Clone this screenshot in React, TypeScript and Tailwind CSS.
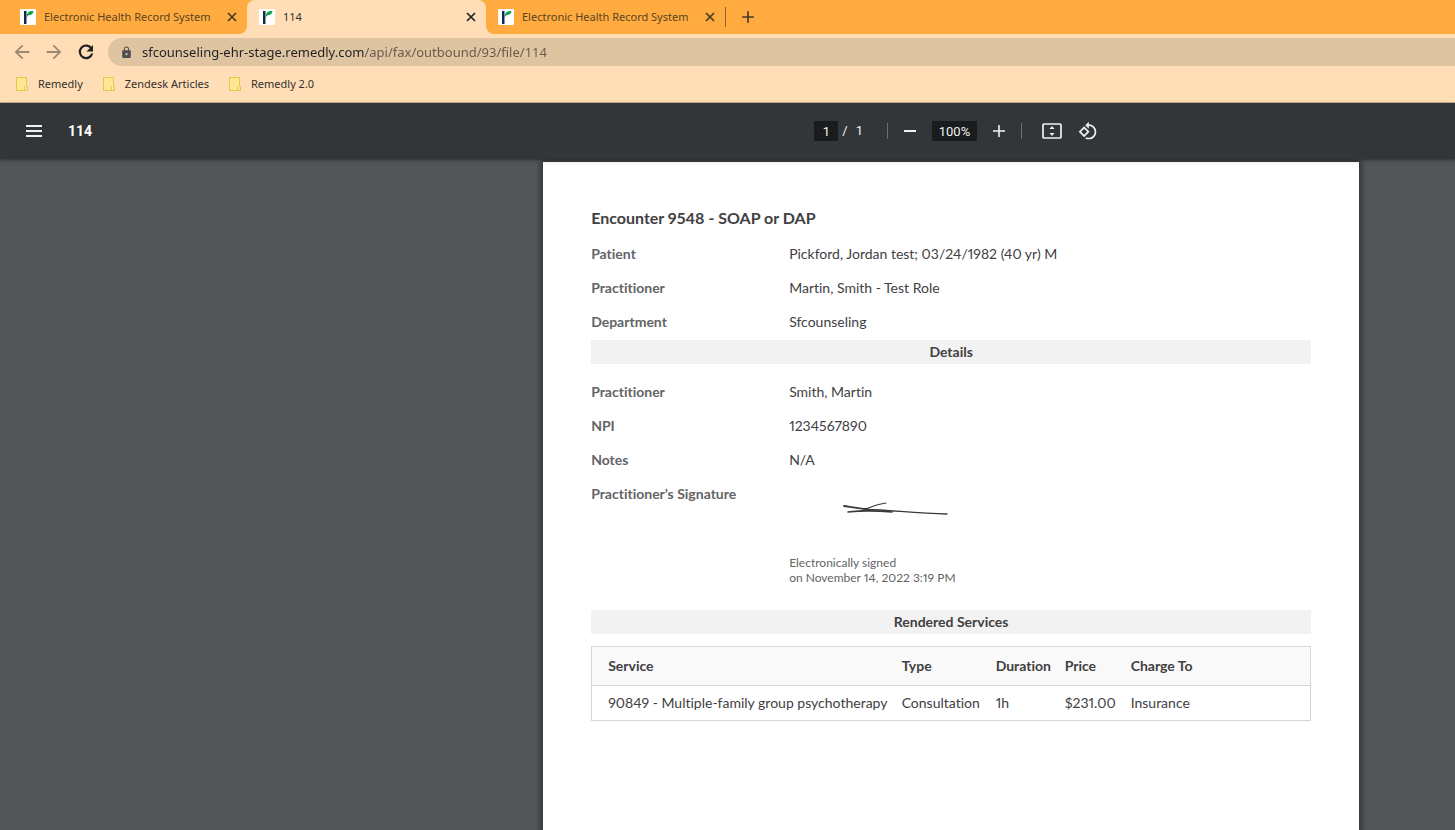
import type { ReactNode } from "react";
import {
  MdAdd,
  MdArrowBack,
  MdArrowForward,
  MdLock,
  MdRotate90DegreesCcw,
} from "react-icons/md";

const bookmarks = ["Remedly", "Zendesk Articles", "Remedly 2.0"];

const services = [
  {
    service: "90849 - Multiple-family group psychotherapy",
    type: "Consultation",
    duration: "1h",
    price: "$231.00",
    chargeTo: "Insurance",
  },
];

export default function App() {
  return (
    <div className="flex h-screen flex-col overflow-hidden bg-[#525659]">
      <BrowserChrome />
      <PdfToolbar />

      {/* Viewer */}
      <main className="grid min-h-0 flex-1 grid-cols-[17fr_816px_3fr] overflow-hidden pt-[3px]">
        <DocumentPage />
      </main>
    </div>
  );
}

/* ---------------- Browser ---------------- */

function BrowserChrome() {
  return (
    <header className="shrink-0 border-b border-[#c9ae8c] bg-[#ffdeb7] font-['Noto_Sans',sans-serif] text-[11px] text-[#35302a]">
      {/* Tabs */}
      <div className="flex h-[34px]">
        <div className="rounded-br-lg bg-[#ffab40] pl-2">
          <Tab title="Electronic Health Record System" />
        </div>
        <div className="bg-linear-to-b from-[#ffab40] from-50% to-[#ffdeb7] to-50%">
          <div className="rounded-t-lg bg-[#ffdeb7]">
            <Tab title="114" active />
          </div>
        </div>
        <div className="flex flex-1 items-center rounded-bl-lg bg-[#ffab40]">
          <Tab title="Electronic Health Record System" />
          <div className="h-5 w-px bg-[#8a6536]" />
          <button aria-label="New tab" className="ml-3 text-[#4a3a22]">
            <MdAdd size={20} />
          </button>
        </div>
      </div>

      {/* Address bar */}
      <div className="flex h-8 items-end pl-[11px]">
        <div className="flex h-7 items-center gap-2.5 text-[#9d8a73]">
          <button aria-label="Back">
            <MdArrowBack size={22} />
          </button>
          <button aria-label="Forward">
            <MdArrowForward size={22} />
          </button>
          <button aria-label="Reload" className="text-[#1f2022]">
            <ReloadIcon />
          </button>
        </div>
        <div className="ml-[11px] flex h-7 flex-1 items-center rounded-l-full bg-[#dfc4a1] pl-3">
          <MdLock size={13} className="text-[#4c4d50]" />
          <input
            aria-label="Address"
            readOnly
            value="sfcounseling-ehr-stage.remedly.com/api/fax/outbound/93/file/114"
            className="ml-[9px] h-7 flex-1 bg-linear-to-r from-[#202124] from-[223px] to-[#66594a] to-[223px] bg-clip-text text-[13px] text-transparent outline-none"
          />
        </div>
      </div>

      {/* Bookmarks */}
      <nav className="flex h-9 items-center gap-5 pl-4">
        {bookmarks.map((name) => (
          <a key={name} href="#" className="flex items-center gap-2.5">
            <FolderIcon />
            {name}
          </a>
        ))}
      </nav>
    </header>
  );
}

function Tab({ title, active = false }: { title: string; active?: boolean }) {
  return (
    <div className="flex h-[34px] w-[239px] items-center pr-2 pl-3">
      <Favicon />
      <span className={`ml-2 flex-1 whitespace-nowrap ${active ? "text-[#35302a]" : "text-[#5c441f]"}`}>
        {title}
      </span>
      <button aria-label="Close tab" className={active ? "text-[#202124]" : "text-[#4a3a22]"}>
        <svg width="14" height="14" viewBox="0 0 14 14" stroke="currentColor" strokeWidth="1.7" className="block">
          <path d="M3 3l8 8M11 3l-8 8" />
        </svg>
      </button>
    </div>
  );
}

function Favicon() {
  return (
    <svg width="16" height="16" viewBox="0 0 16 16" className="shrink-0">
      <rect width="16" height="16" rx="1" fill="#fff" />
      <path d="M4 2h2.500v13H4z" fill="#12294b" />
      <path d="M7 6.500C7 3.500 9 1.600 13.500 2c-.3 3-2.300 4-5 4.200L7 8z" fill="#12a150" />
    </svg>
  );
}

function ReloadIcon() {
  return (
    <svg width="22" height="22" viewBox="0 0 22 22" fill="none" className="block">
      <path d="M16.500 7.500A6.300 6.300 0 1 0 17.200 12.500" stroke="currentColor" strokeWidth="2.200" />
      <path d="M18 4v6.500h-6.500z" fill="currentColor" />
    </svg>
  );
}

function FolderIcon() {
  return (
    <svg width="12" height="14" viewBox="0 0 12 14">
      <path d="M.5.5h10v9h1v4H.5z" fill="#ffe694" />
      <path d="M8.500 13.500H.5V.5h10v9h1v4h-3v-4" fill="none" stroke="#e8c84a" />
    </svg>
  );
}

/* ---------------- PDF toolbar ---------------- */

function PdfToolbar() {
  return (
    <div className="z-10 grid h-14 shrink-0 grid-cols-[17fr_816px_3fr] items-center bg-[#323639] font-[Roboto,sans-serif] text-[13px] text-[#f1f1f1] shadow-[0_1px_2px_rgba(0,0,0,0.3),0_2px_6px_rgba(0,0,0,0.15)]">
      <div className="flex items-center gap-[26px] pl-[26px]">
        <button aria-label="Menu">
          <svg width="16" height="12" viewBox="0 0 16 12" fill="currentColor" className="block">
            <path d="M0 0h16v2H0zM0 5h16v2H0zM0 10h16v2H0z" />
          </svg>
        </button>
        <h1 className="text-sm font-bold text-white">114</h1>
      </div>

      <div className="flex items-center justify-center pl-2.5">
        <input
          aria-label="Page number"
          defaultValue="1"
          className="h-5 w-6 bg-[#191b1c] text-center outline-none"
        />
        <span className="ml-1">/</span>
        <span className="ml-2">1</span>
        <div className="ml-6 h-4 w-px bg-[#6c7073]" />
        <button aria-label="Zoom out" className="ml-4">
          <svg width="12" height="12" viewBox="0 0 12 12" fill="currentColor" className="block">
            <path d="M0 5h12v2H0z" />
          </svg>
        </button>
        <input
          aria-label="Zoom level"
          defaultValue="100%"
          className="ml-4 h-5 w-[45px] bg-[#191b1c] text-center outline-none"
        />
        <button aria-label="Zoom in" className="ml-4">
          <svg width="12" height="12" viewBox="0 0 12 12" fill="currentColor" className="block">
            <path d="M0 5.200h5.200V0h1.600v5.200H12v1.600H6.800V12H5.200V6.800H0z" />
          </svg>
        </button>
        <div className="ml-4 h-4 w-px bg-[#6c7073]" />
        <button aria-label="Fit to page" className="ml-5">
          <svg width="20" height="16" viewBox="0 0 20 16" className="block">
            <rect x="1" y="1" width="18" height="14" rx="1" fill="none" stroke="currentColor" strokeWidth="1.700" />
            <path d="M10 3l2.500 3h-5zM10 13l2.500-3h-5z" fill="currentColor" />
          </svg>
        </button>
        <button aria-label="Rotate counterclockwise" className="ml-4">
          <MdRotate90DegreesCcw size={20} />
        </button>
      </div>
    </div>
  );
}

/* ---------------- Document ---------------- */

function DocumentPage() {
  return (
    <article className="col-start-2 min-h-[1056px] bg-white px-12 pt-12 font-[Lato,sans-serif] text-sm text-[#414042] proportional-nums shadow-[0_0_6px_2px_rgba(0,0,0,0.45)] [font-variant-ligatures:none]">
      <h2 className="mb-[11px] text-base leading-4 font-bold">Encounter 9548 - SOAP or DAP</h2>

      <dl>
        <Field label="Patient">Pickford, Jordan test; 03/24/1982 (40 yr) M</Field>
        <Field label="Practitioner">Martin, Smith - Test Role</Field>
        <Field label="Department">Sfcounseling</Field>
      </dl>

      <SectionTitle>Details</SectionTitle>

      <dl className="mt-[11px]">
        <Field label="Practitioner">Smith, Martin</Field>
        <Field label="NPI">1234567890</Field>
        <Field label="Notes">N/A</Field>
        <Field label="Practitioner’s Signature">
          <Signature />
          <p className="text-xs leading-[15px] text-[#636466]">
            Electronically signed
            <br />
            on November 14, 2022 3:19 PM
          </p>
        </Field>
      </dl>

      <div className="mt-[25px]">
        <SectionTitle>Rendered Services</SectionTitle>
      </div>

      <table className="mt-3 w-full table-fixed border-collapse border border-[#d6d6d6] text-left">
        <thead>
          <tr className="h-[39px] border-b border-[#d6d6d6] bg-[#f9f9f9]">
            <th className="w-[302px] pl-4 font-bold">Service</th>
            <th className="w-[94px] pl-2 font-bold">Type</th>
            <th className="w-[69px] pl-2 font-bold">Duration</th>
            <th className="w-[66px] pl-2 font-bold">Price</th>
            <th className="pl-2 font-bold">Charge To</th>
          </tr>
        </thead>
        <tbody>
          {services.map((s) => (
            <tr key={s.service} className="h-[35px] whitespace-nowrap">
              <td className="pl-4">{s.service}</td>
              <td className="pl-2">{s.type}</td>
              <td className="pl-2">{s.duration}</td>
              <td className="pl-2">{s.price}</td>
              <td className="pl-2">{s.chargeTo}</td>
            </tr>
          ))}
        </tbody>
      </table>
    </article>
  );
}

function Field({ label, children }: { label: string; children: ReactNode }) {
  return (
    <div className="flex leading-[34px]">
      <dt className="w-[198px] shrink-0 font-bold text-[#636466]">{label}</dt>
      <dd>{children}</dd>
    </div>
  );
}

function SectionTitle({ children }: { children: ReactNode }) {
  return <h3 className="mt-px bg-[#f2f2f2] text-center leading-6 font-bold">{children}</h3>;
}

function Signature() {
  return (
    <svg
      width="180"
      height="78"
      viewBox="0 0 180 78"
      fill="none"
      stroke="#3a3a3c"
      strokeLinecap="round"
      className="block"
      role="img"
      aria-label="Signature"
    >
      <path d="M55 29C62 30 70 31.500 78 32" strokeWidth="1.800" />
      <path d="M78 32.500C100 33 125 36 158 37" strokeWidth="1.300" />
      <path d="M59 35C68 34 86 33.500 103 35" strokeWidth="1.600" />
      <path d="M72 34C80 31 88 27 97 26" strokeWidth="1.200" />
    </svg>
  );
}
